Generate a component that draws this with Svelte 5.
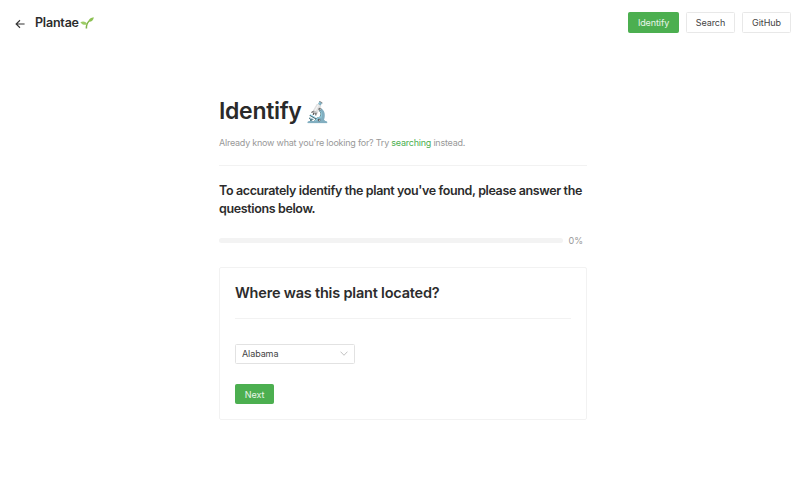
<script>
  const links = [
    { label: "Identify", active: true, width: 51 },
    { label: "Search", width: 49 },
    { label: "GitHub", width: 49 },
  ];
</script>

<header class="top">
  <div class="brand">
    <svg class="back" viewBox="0 0 12 12" width="10" height="10" fill="none" stroke="#333" stroke-width="1.3">
      <path d="M11.5 6H1.5M6 1.5 1.3 6 6 10.5" />
    </svg>
    <span class="name">Plantae</span>
    <svg class="sprout" viewBox="0 0 14 12" width="14" height="12">
      <path d="M5.6 11.5C5.6 8.5 6.4 6 8.4 3.8L9.6 4.6C7.6 6.6 7 8.8 7.2 11.5Z" fill="#7fb24a" />
      <path d="M8.2 4.6C8.6 2 11 .4 13.8 .2 13.6 3 11.4 5.2 8.2 4.6Z" fill="#8cc152" />
      <path d="M7.2 7.2C6.4 4.9 3.4 3.8 .4 5.2 1.8 7.6 5 8.4 7.2 7.2Z" fill="#9ccc65" />
    </svg>
  </div>
  <nav class="links">
    {#each links as link}
      <button class="btn" class:primary={link.active} style={`width: ${link.width}px`}>{link.label}</button>
    {/each}
  </nav>
</header>

<main class="page">
  <h1 class="title">Identify <span class="scope">🔬</span></h1>
  <p class="hint">Already know what you're looking for? Try <span class="link">searching</span> instead.</p>
  <hr />
  <h2 class="lead">To accurately identify the plant you've found, please answer the questions below.</h2>
  <div class="progress">
    <div class="bar"></div>
    <span class="pct">0%</span>
  </div>
  <section class="card">
    <h3 class="question">Where was this plant located?</h3>
    <hr class="inner" />
    <div class="select">
      <span>Alabama</span>
      <svg viewBox="0 0 10 6" width="8" height="5" fill="none" stroke="#aaa" stroke-width="0.9">
        <path d="M.7.7 5 5.2 9.3.7" />
      </svg>
    </div>
    <button class="btn primary next">Next</button>
  </section>
</main>

<style>
  :global(body) {
    margin: 0;
    background: #fff;
    font-family: Inter, "Liberation Sans", sans-serif;
    color: #333;
  }

  .top {
    display: flex;
    justify-content: space-between;
    align-items: flex-start;
    padding: 12px 15px 0 15px;
    height: 33px;
  }

  .brand {
    display: flex;
    align-items: center;
    height: 21px;
  }

  .back {
    margin-right: 10px;
    margin-top: 3px;
  }

  .name {
    font-size: 12.5px;
    font-weight: 600;
    color: #2c2c2c;
    letter-spacing: -0.2px;
    margin-right: 1px;
  }

  .sprout {
    margin-top: 0;
  }

  .links {
    display: flex;
    gap: 7px;
  }

  .btn {
    box-sizing: border-box;
    height: 21px;
    padding: 0;
    border: 1px solid #e8e8e8;
    border-radius: 1.5px;
    background: #fff;
    color: #444;
    font-family: inherit;
    font-size: 9px;
    letter-spacing: -0.1px;
    line-height: 1;
  }

  .primary {
    background: #4caf50;
    border-color: #4caf50;
    color: #e8f5e9;
  }

  .page {
    box-sizing: border-box;
    width: 368px;
    margin: 0 auto;
    padding-top: 51px;
  }

  .title {
    margin: 0;
    font-size: 23px;
    line-height: 30px;
    font-weight: 600;
    letter-spacing: -0.3px;
    color: #2a2a2a;
  }

  .scope {
    margin-left: -2px;
    font-size: 20px;
    font-family: "Noto Color Emoji", sans-serif;
  }

  .hint {
    margin: 9px 0 0;
    font-size: 9px;
    line-height: 14px;
    letter-spacing: -0.23px;
    color: #999;
  }

  .link {
    color: #4caf50;
  }

  hr {
    border: 0;
    border-top: 1px solid #f2f2f2;
    margin: 15px 0 0;
  }

  .lead {
    margin: 16px 0 0;
    font-size: 12.5px;
    line-height: 18px;
    font-weight: 600;
    letter-spacing: -0.37px;
    color: #2c2c2c;
  }

  .progress {
    display: flex;
    align-items: center;
    gap: 5px;
    margin-top: 15px;
    padding-right: 4px;
    height: 14px;
  }

  .bar {
    flex: 1;
    height: 5px;
    border-radius: 3px;
    background: #f3f3f3;
  }

  .pct {
    font-size: 9px;
    color: #999;
  }

  .card {
    box-sizing: border-box;
    margin-top: 20px;
    height: 153px;
    padding: 14px 15px 15px;
    border: 1px solid #f2f2f2;
    border-radius: 2px;
  }

  .question {
    margin: 0;
    font-size: 14.5px;
    line-height: 22px;
    font-weight: 600;
    letter-spacing: -0.2px;
    color: #2c2c2c;
  }

  .inner {
    margin-top: 14px;
  }

  .select {
    box-sizing: border-box;
    display: flex;
    justify-content: space-between;
    align-items: center;
    width: 120px;
    height: 20px;
    margin-top: 25px;
    padding: 0 6px 1px 6px;
    border: 1px solid #e2e2e2;
    border-radius: 1.5px;
    font-size: 9px;
    letter-spacing: -0.1px;
    color: #444;
  }

  .next {
    display: block;
    margin-top: 20px;
    width: 39px;
    height: 20px;
  }
</style>
